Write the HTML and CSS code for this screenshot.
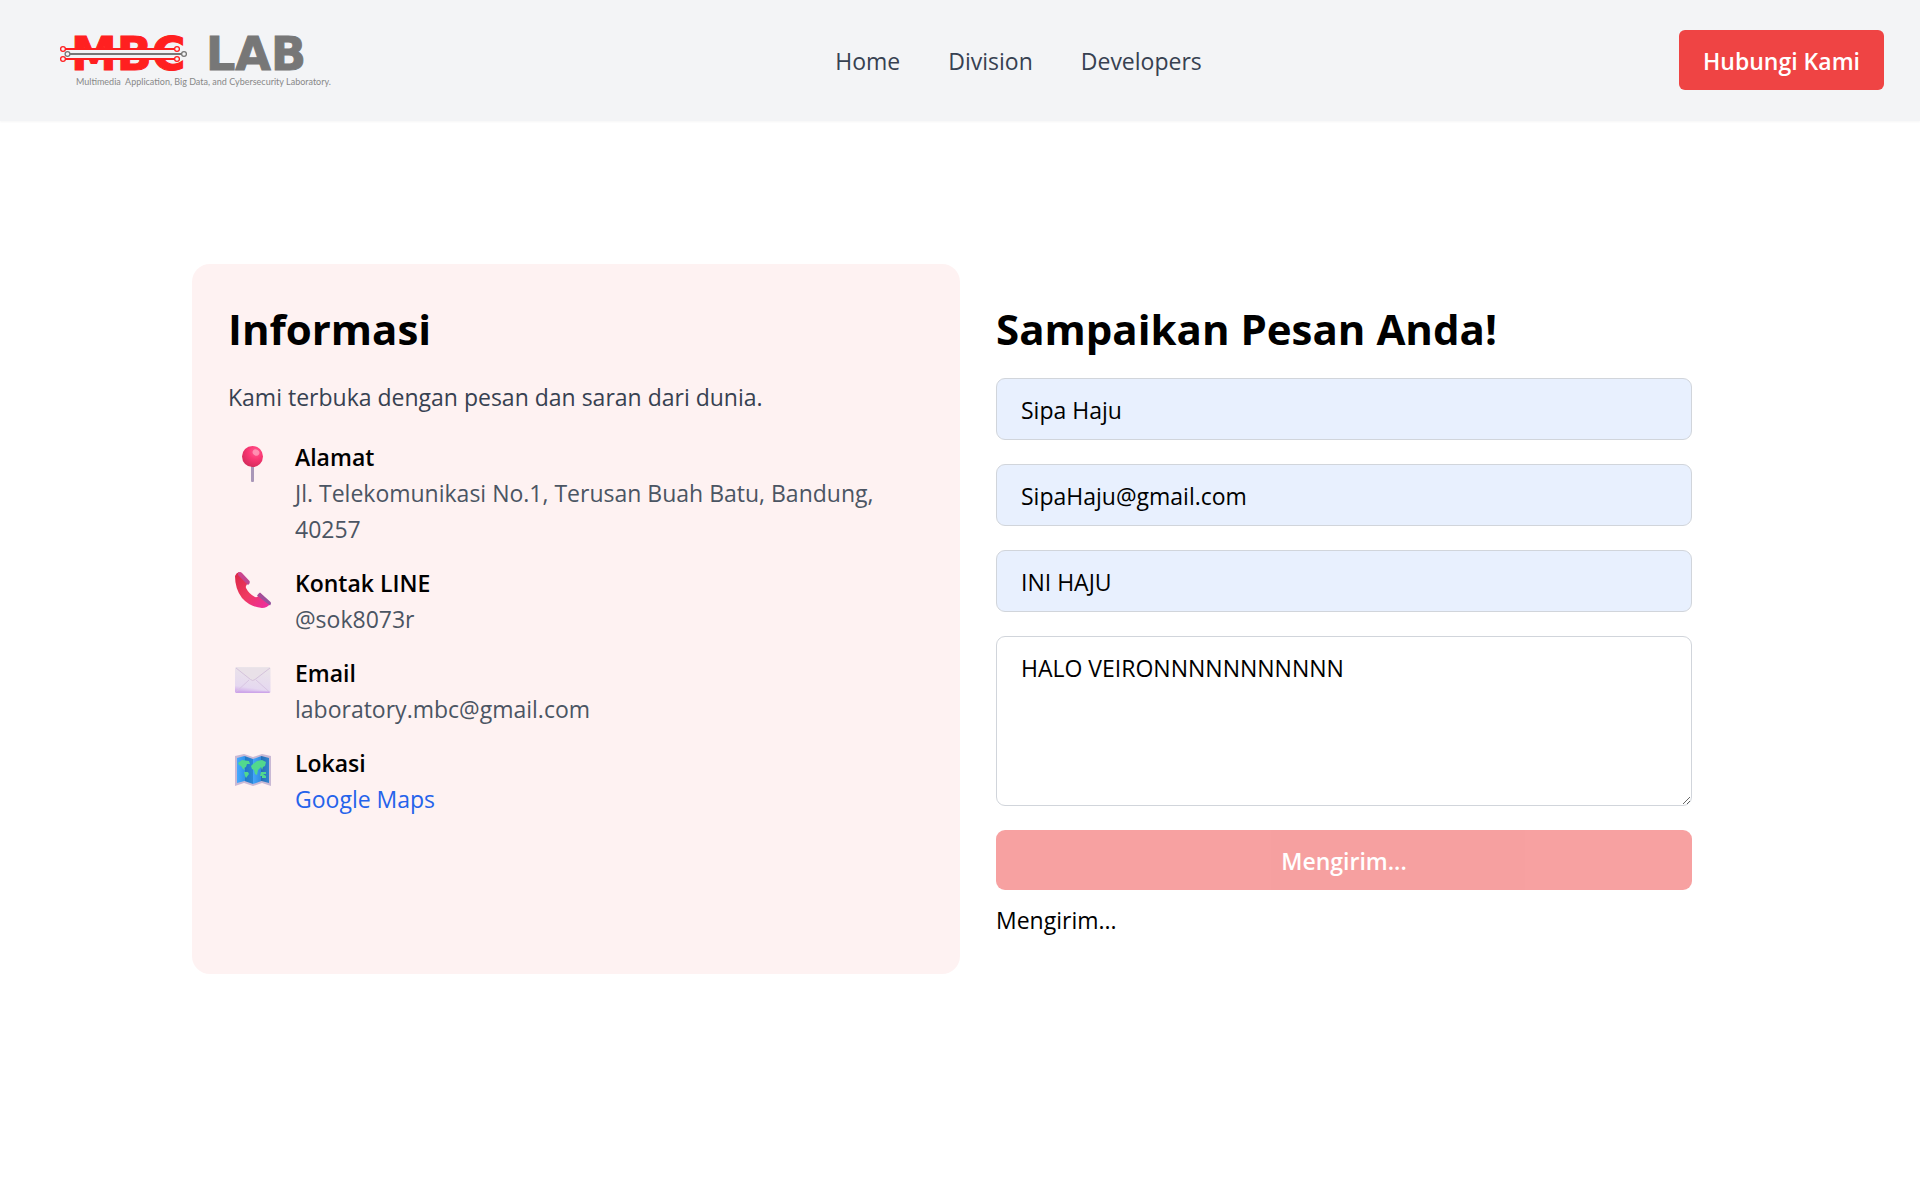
FILE: index.html
```html
<!DOCTYPE html>
<html lang="id">
<head>
<meta charset="utf-8">
<meta name="viewport" content="width=device-width, initial-scale=1">
<title>MBC Lab - Hubungi Kami</title>
<link rel="stylesheet" href="styles.css">
</head>
<body>
<header class="navbar">
  <a class="logo" href="#" aria-label="MBC Lab">
    <svg class="logo-art" viewBox="0 0 322 72" role="img" aria-hidden="true">
      <text class="logo-mbc" x="35" y="46">MBC</text>
      <text class="logo-lab" x="170" y="46">LAB</text>
      <path d="M33 26H142V34H33Z" fill="#f3f4f6"/>
      <g fill="none" stroke-width="2">
        <path d="M29 25H138M29 35H138" stroke="#ff2020"/>
        <path d="M33 30H146" stroke="#777"/>
      </g>
      <g fill="#f3f4f6" stroke-width="1.3">
        <g stroke="#ff2020"><circle cx="27" cy="25" r="2.4"/><circle cx="27" cy="35" r="2.4"/><circle cx="141" cy="25" r="2.4"/><circle cx="141" cy="35" r="2.4"/></g>
        <g stroke="#777"><circle cx="31.500" cy="30" r="2.400"/><circle cx="148" cy="30" r="2.400"/></g>
      </g>
      <text class="logo-tagline" x="40" y="61">Multimedia&#160; Application, Big Data, and Cybersecurity Laboratory.</text>
    </svg>
  </a>
  <nav class="nav-links" aria-label="Utama">
    <a href="#">Home</a>
    <a href="#">Division</a>
    <a href="#">Developers</a>
  </nav>
  <button class="contact-button" type="button">Hubungi Kami</button>
</header>

<main class="contact">
  <section class="info">
    <h2 class="title">Informasi</h2>
    <p class="lead">Kami terbuka dengan pesan dan saran dari dunia.</p>
    <ul class="info-list">
      <li class="info-item">
        <svg class="icon" viewBox="0 0 36 36" aria-hidden="true">
          <defs><radialGradient id="pin" cx=".65" cy=".28" r=".75"><stop offset="0" stop-color="#ff5c92"/><stop offset=".45" stop-color="#fb3874"/><stop offset="1" stop-color="#d52c5c"/></radialGradient></defs>
          <rect x="16" y="19" width="3" height="17" rx="1" fill="#a997b8"/>
          <circle cx="17.500" cy="10.500" r="10.500" fill="url(#pin)"/>
          <ellipse cx="21" cy="6.500" rx="3.500" ry="3" fill="#ffa3bd" opacity=".75" transform="rotate(35 21 6.500)"/>
        </svg>
        <div><h3>Alamat</h3><p>Jl. Telekomunikasi No.1, Terusan Buah Batu, Bandung, 40257</p></div>
      </li>
      <li class="info-item">
        <svg class="icon" viewBox="0 0 36 36" aria-hidden="true">
          <defs>
            <linearGradient id="phone" x1="0" y1="0" x2="1" y2="1"><stop offset="0" stop-color="#db2745"/><stop offset=".5" stop-color="#ef3a61"/><stop offset="1" stop-color="#ed2ba6"/></linearGradient>
            <linearGradient id="cap" x1="0" y1="0" x2="1" y2="1"><stop offset="0" stop-color="#d0438c"/><stop offset="1" stop-color="#91539f"/></linearGradient>
          </defs>
          <path d="M0 4Q1 1 4 0L14 11Q10 13 11 16Q14 22 20 25Q23 26 25 21L35 32Q32 36 27 36Q15 35 7 26Q0 17 0 4Z" fill="url(#phone)"/>
          <path d="M3 1Q5-1 7 1L14.500 9Q15.500 11 13 13L3 3ZM25 20.500L35 29.500Q37 31 35 33.500L22 23.500Q24 21 25 20.500Z" fill="url(#cap)"/>
        </svg>
        <div><h3>Kontak LINE</h3><p>@sok8073r</p></div>
      </li>
      <li class="info-item">
        <svg class="icon" viewBox="0 0 36 36" aria-hidden="true">
          <defs><linearGradient id="mail" x1=".6" y1="0" x2=".4" y2="1"><stop offset="0" stop-color="#ebe5e9"/><stop offset=".8" stop-color="#e5d8f0"/><stop offset="1" stop-color="#d2aceb"/></linearGradient></defs>
          <rect y="5" width="35.500" height="26" rx="1.500" fill="url(#mail)"/>
          <path d="M1 30L14 18M34.500 30L21 18" stroke="#d8c5e2" fill="none"/>
          <path d="M1 6L15.500 17.500Q17.700 19.500 20 17.500L35 6" fill="#e9e1e8" stroke="#d5c3dc"/>
          <path d="M1 30.300H34.500" stroke="#cda5e9" stroke-width="1.500"/>
        </svg>
        <div><h3>Email</h3><p>laboratory.mbc@gmail.com</p></div>
      </li>
      <li class="info-item">
        <svg class="icon" viewBox="0 0 36 36" aria-hidden="true">
          <defs><linearGradient id="sea"><stop offset="0" stop-color="#46a9ff"/><stop offset=".24" stop-color="#3195ea"/><stop offset=".25" stop-color="#2278c4"/><stop offset=".49" stop-color="#2b86d6"/><stop offset=".5" stop-color="#45a5fa"/><stop offset=".75" stop-color="#318be0"/><stop offset=".76" stop-color="#2870b5"/><stop offset="1" stop-color="#3185d0"/></linearGradient></defs>
          <path d="M0 4L9 2L18 5L27 2L36 4V34L27 31L18 34L9 31L0 34Z" fill="#c9b9d5"/>
          <path d="M2 6L9.500 4L18 7L26.500 4L34 6V31L26.500 29L18 32L9.500 29L2 31Z" fill="url(#sea)"/>
          <path d="M3 11L7 8L14 9L15 12L12 12L11 15L9 16L10 18L8 17L6 14L4 13ZM9 20L13 20L14 22L11 26L10 24ZM18 12L22 9L27 8L31 10L30 14L28 15L27 18L26 15L23 18L22 23L20 22L19 18L17 17L16 14ZM26 20H31V22H28L31 24V26H27V24H25Z" fill="#52d88d"/>
        </svg>
        <div><h3>Lokasi</h3><p><a class="map-link" href="#">Google Maps</a></p></div>
      </li>
    </ul>
  </section>

  <section class="message">
    <h2 class="title">Sampaikan Pesan Anda!</h2>
    <form class="form">
      <input class="field filled" type="text" aria-label="Nama" value="Sipa Haju">
      <input class="field filled" type="email" aria-label="Email" value="SipaHaju@gmail.com">
      <input class="field filled" type="text" aria-label="Subjek" value="INI HAJU">
      <textarea class="field" rows="4" aria-label="Pesan" spellcheck="false">HALO VEIRONNNNNNNNNNN</textarea>
      <button class="submit" type="submit" disabled>Mengirim...</button>
    </form>
    <p class="status" role="status">Mengirim...</p>
  </section>
</main>
</body>
</html>
```
FILE: styles.css
```css
*, *::before, *::after {
  box-sizing: border-box;
}

body, h2, h3, p, ul {
  margin: 0;
  padding: 0;
}

body {
  font-family: "Open Sans", "Noto Sans", sans-serif;
  font-size: 23px;
  line-height: 36px;
  color: #000;
  background: #fff;
}

input, textarea, button {
  font: inherit;
  color: inherit;
}

a {
  color: inherit;
  text-decoration: none;
}

.navbar {
  display: flex;
  align-items: center;
  justify-content: space-between;
  padding: 24px 36px;
  border-bottom: 1px solid #f3f4f6;
  background: #f3f4f6;
  box-shadow: 0 1px 2px rgba(0, 0, 0, 0.04);
}

.logo-art {
  display: block;
  width: 322px;
  height: 72px;
}

.logo-mbc,
.logo-lab {
  font-family: "DejaVu Sans", sans-serif;
  font-weight: 700;
  font-size: 46px;
  stroke-width: 1;
}

.logo-mbc {
  fill: #ff2020;
  stroke: #ff2020;
}

.logo-lab {
  fill: #777;
  stroke: #777;
}

.logo-tagline {
  font-family: Lato, sans-serif;
  font-size: 9px;
  fill: #888;
}

.nav-links {
  display: flex;
  gap: 48px;
  padding-top: 2px;
  color: #374151;
}

.contact-button {
  padding: 13px 24px 11px;
  border: 0;
  border-radius: 6px;
  color: #fff;
  background: #ef4444;
  font-weight: 600;
}

.contact {
  display: grid;
  grid-template-columns: 1fr 1fr;
  max-width: 1536px;
  margin: 143px auto;
}

.info,
.message {
  padding: 36px;
}

.info {
  border-radius: 18px;
  background: #fef2f2;
}

.title {
  margin-bottom: 20px;
  font-size: 42px;
  line-height: 58px;
  font-weight: 700;
}

.lead {
  padding-top: 1px;
  margin-bottom: 24px;
  color: #374151;
}

.info-list {
  display: grid;
  gap: 18px;
  list-style: none;
}

.info-item {
  display: flex;
  gap: 24px;
  padding-left: 7px;
  color: #4b5563;
}

.info-item h3 {
  font-size: 23px;
  font-weight: 600;
  color: #000;
}

.icon {
  flex: none;
  width: 36px;
  height: 36px;
  margin-top: 7px;
}

.map-link {
  color: #2563eb;
}

.form {
  display: grid;
  gap: 24px;
}

.field {
  display: block;
  width: 100%;
  padding: 13px 24px 11px;
  border: 1px solid #d1d5db;
  border-radius: 9px;
  background: #fff;
}

.filled {
  background: #e8f0fe;
}

.submit {
  padding: 13px 24px 11px;
  border: 0;
  border-radius: 9px;
  color: #fff;
  background: #ef4444;
  font-weight: 600;
  opacity: 0.5;
}

.status {
  margin-top: 12px;
}
```
